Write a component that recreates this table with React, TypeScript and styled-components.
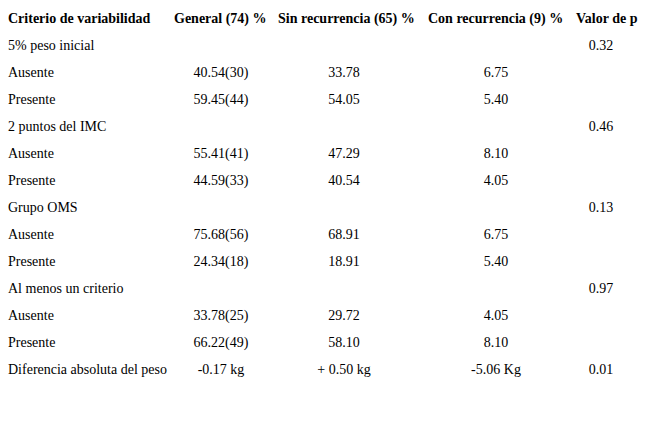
import React from "react";
import styled, { createGlobalStyle } from "styled-components";

const GlobalStyle = createGlobalStyle`
  html, body {
    margin: 0;
    padding: 0;
    background: #ffffff;
  }
  body {
    font-family: "Liberation Serif", "Times New Roman", serif;
    color: #000000;
  }
`;

const Table = styled.div`
  display: grid;
  grid-template-columns: 170px 102px 144px 160px 50px;
  grid-auto-rows: 27px;
  padding-top: 5px;
  width: 647px;
  font-family: "Liberation Serif", "Times New Roman", serif;
  font-size: 14px;
`;

const HeadCell = styled.div<{ $indent: number }>`
  display: flex;
  align-items: center;
  padding-left: ${(p) => p.$indent}px;
  font-weight: bold;
  white-space: nowrap;
  overflow: visible;
`;

const LabelCell = styled.div`
  display: flex;
  align-items: center;
  padding-left: 8px;
  white-space: nowrap;
`;

const ValueCell = styled.div`
  display: flex;
  align-items: center;
  justify-content: center;
  white-space: nowrap;
`;

type Row = [string, string, string, string, string];

const headers: { label: string; indent: number }[] = [
  { label: "Criterio de variabilidad", indent: 8 },
  { label: "General (74) %", indent: 4 },
  { label: "Sin recurrencia (65) %", indent: 6 },
  { label: "Con recurrencia (9) %", indent: 12 },
  { label: "Valor de p", indent: 0 },
];

const rows: Row[] = [
  ["5% peso inicial", "", "", "", "0.32"],
  ["Ausente", "40.54(30)", "33.78", "6.75", ""],
  ["Presente", "59.45(44)", "54.05", "5.40", ""],
  ["2 puntos del IMC", "", "", "", "0.46"],
  ["Ausente", "55.41(41)", "47.29", "8.10", ""],
  ["Presente", "44.59(33)", "40.54", "4.05", ""],
  ["Grupo OMS", "", "", "", "0.13"],
  ["Ausente", "75.68(56)", "68.91", "6.75", ""],
  ["Presente", "24.34(18)", "18.91", "5.40", ""],
  ["Al menos un criterio", "", "", "", "0.97"],
  ["Ausente", "33.78(25)", "29.72", "4.05", ""],
  ["Presente", "66.22(49)", "58.10", "8.10", ""],
  ["Diferencia absoluta del peso", "-0.17 kg", "+ 0.50 kg", "-5.06 Kg", "0.01"],
];

export default function App() {
  return (
    <>
      <GlobalStyle />
      <Table>
        {headers.map((h) => (
          <HeadCell key={h.label} $indent={h.indent}>
            {h.label}
          </HeadCell>
        ))}
        {rows.map((r, i) => (
          <React.Fragment key={i}>
            <LabelCell>{r[0]}</LabelCell>
            <ValueCell>{r[1]}</ValueCell>
            <ValueCell>{r[2]}</ValueCell>
            <ValueCell>{r[3]}</ValueCell>
            <ValueCell>{r[4]}</ValueCell>
          </React.Fragment>
        ))}
      </Table>
    </>
  );
}
